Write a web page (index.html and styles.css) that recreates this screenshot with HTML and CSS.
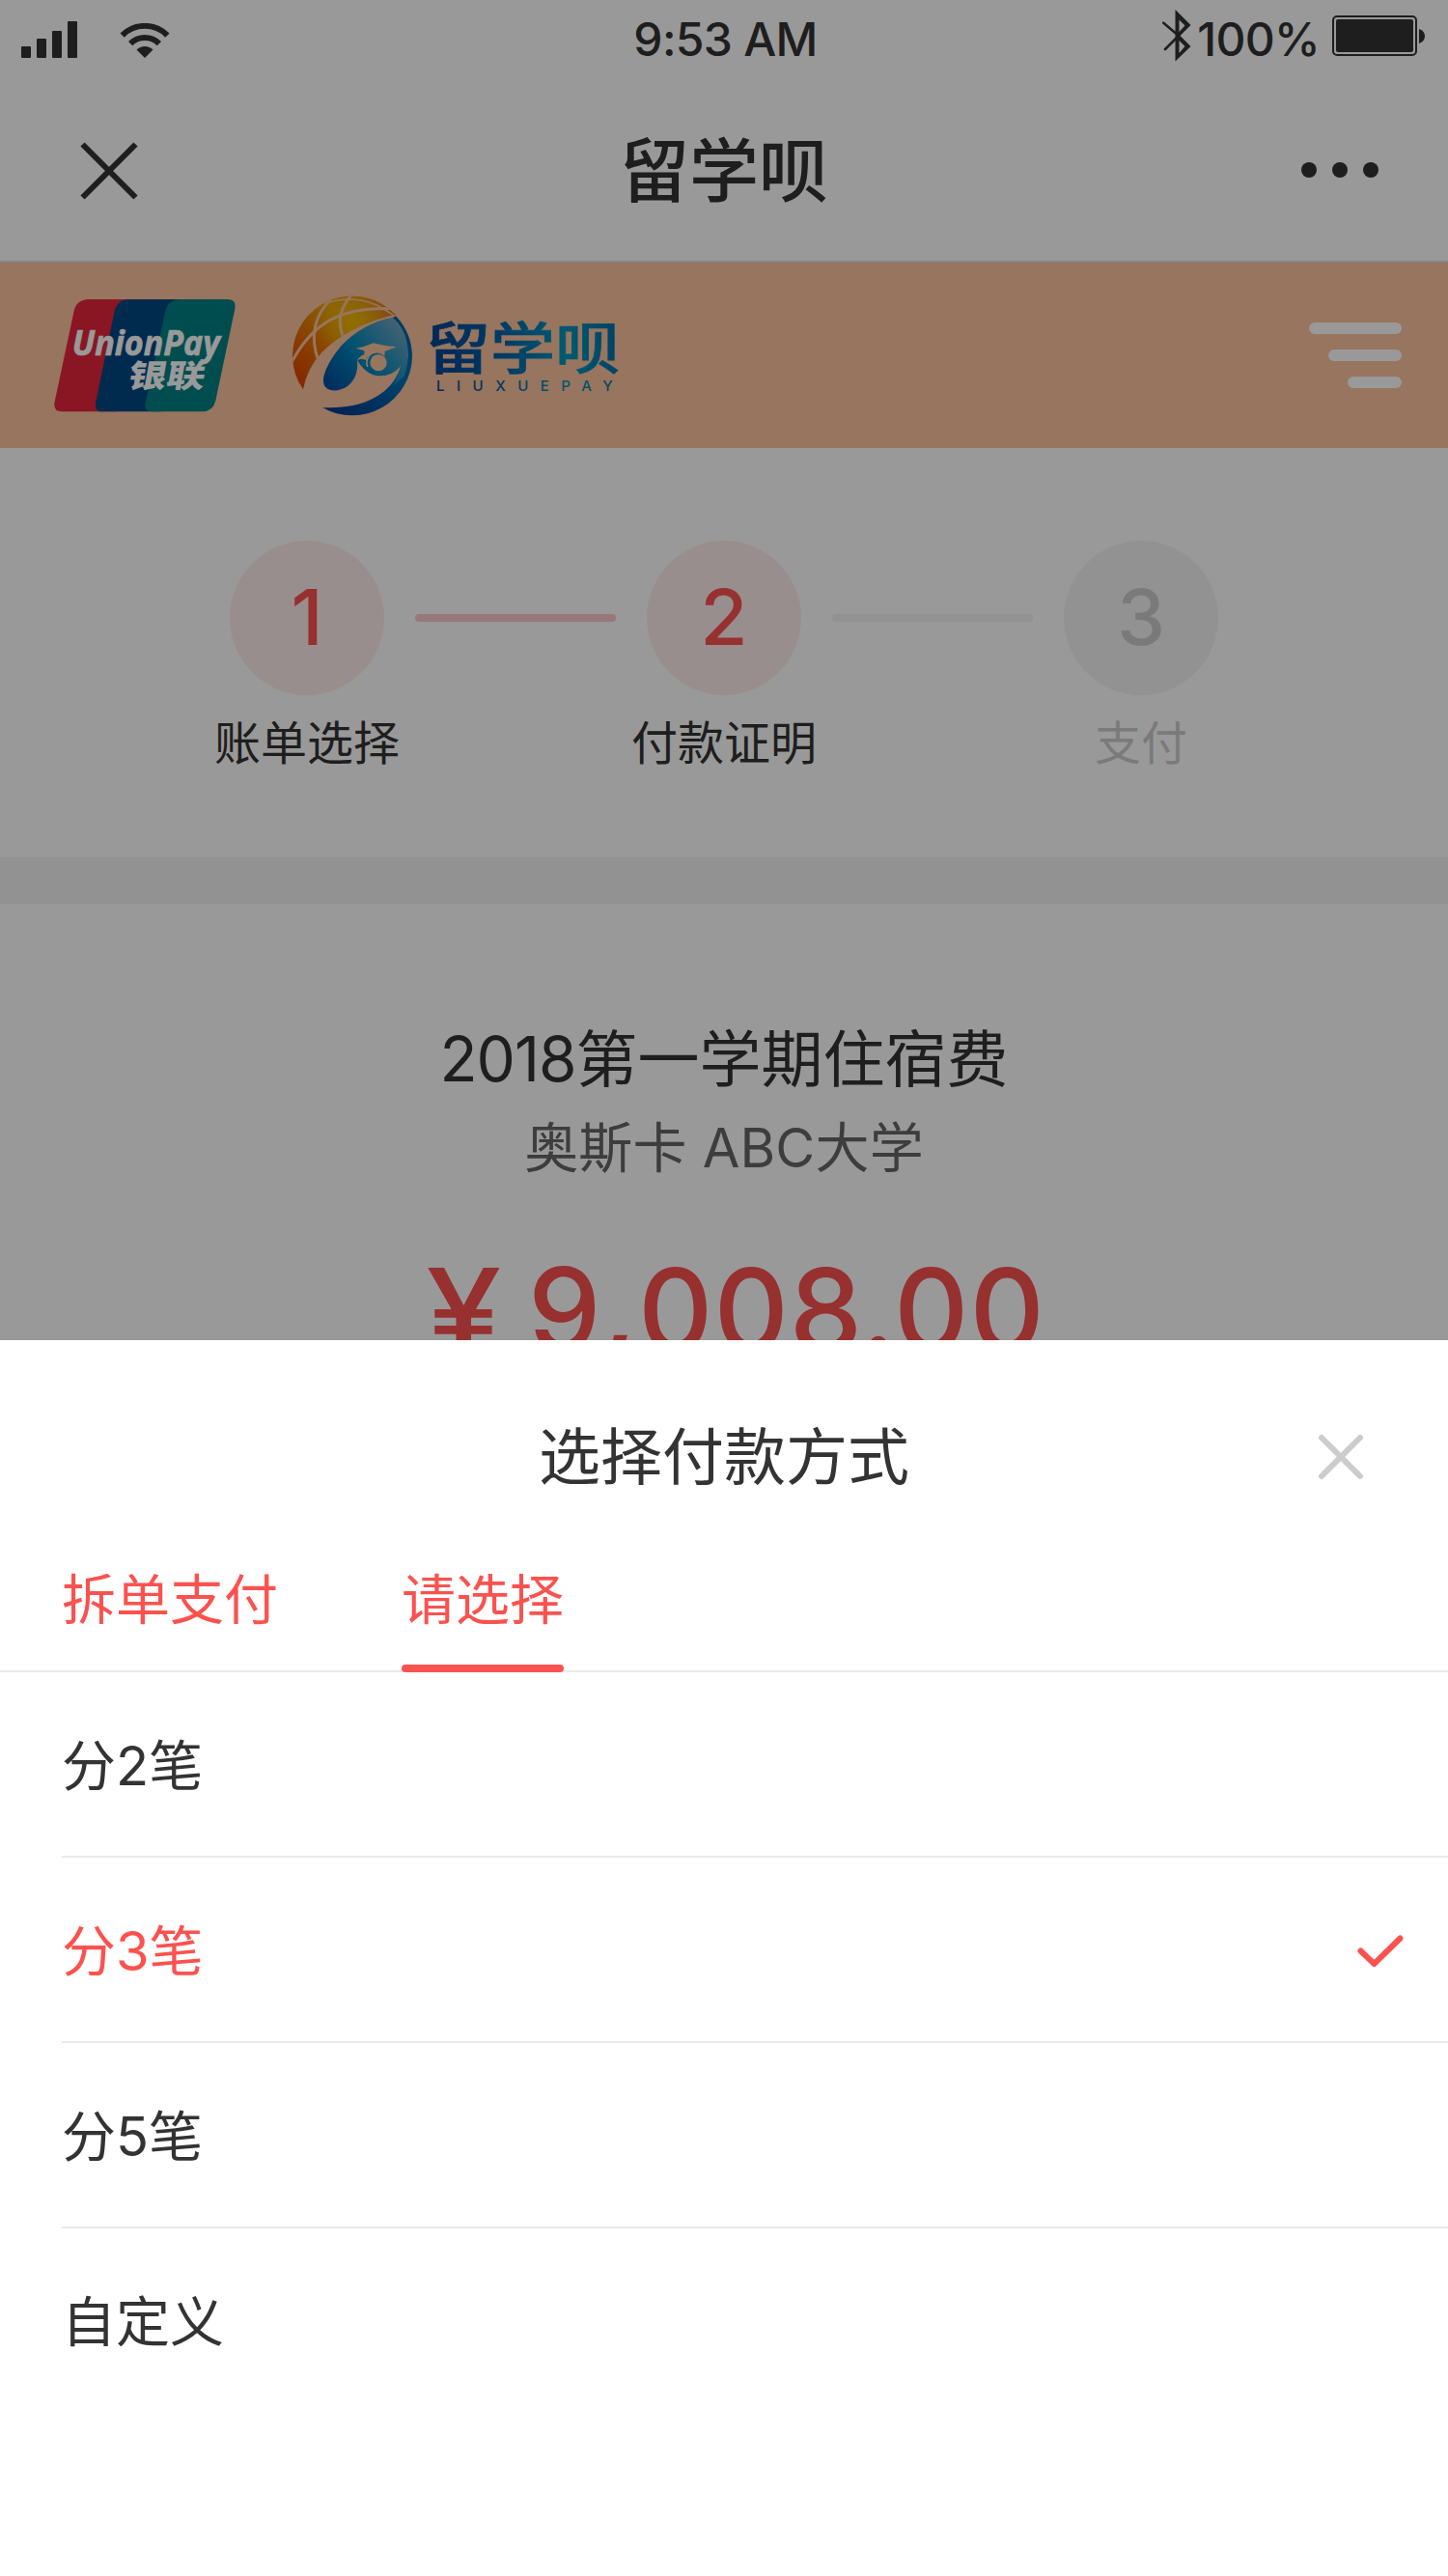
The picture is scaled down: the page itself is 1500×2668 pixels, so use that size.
FILE: index.html
```html
<!DOCTYPE html>
<html lang="zh-CN">
<head>
<meta charset="utf-8">
<title>留学呗</title>
<link rel="stylesheet" href="styles.css">
</head>
<body>
<div class="screen">
  <header class="statusbar">
    <div class="status-left">
      <svg class="signal" width="58" height="38" viewBox="0 0 58 38"><rect y="26" width="10" height="12" rx="1"/><rect x="16" y="18" width="10" height="20" rx="1"/><rect x="32" y="10" width="10" height="28" rx="1"/><rect x="48" width="10" height="38" rx="1"/></svg>
      <svg class="wifi" width="52" height="36" viewBox="-26 -36 52 36"><path d="M0 0L-8.5-8.5A12 12 0 0 1 8.5-8.5Z"/><path class="arc" d="M-14.9-14.9A21 21 0 0 1 14.9-14.9M-23.4-23.4A33 33 0 0 1 23.4-23.4"/></svg>
    </div>
    <div class="time">9:53 AM</div>
    <div class="status-right">
      <svg class="bluetooth" width="30" height="54" viewBox="0 0 30 54"><path fill-rule="evenodd" d="M13.5 0L29.5 16L18.5 27L29.5 38L13.5 53.5ZM17.5 10.5V23L23.5 16.5ZM17.5 32V45L23.5 38Z"/><path class="arms" d="M1.3 13.7L17 27L3 41"/></svg>
      <span class="percent">100%</span>
      <svg class="battery" width="96" height="42" viewBox="0 0 96 42"><rect class="case" x="1" y="1" width="86" height="40" rx="4"/><rect x="4" y="4" width="80" height="34" rx="2"/><path d="M90 14Q96 16 96 21.500Q96 27 90 29Z"/></svg>
    </div>
  </header>

  <nav class="navbar">
    <svg class="nav-close" width="60" height="60" viewBox="0 0 60 60"><path d="M2.500 2.500L57.500 57.500M57.500 2.500L2.500 57.500"/></svg>
    <h1 class="nav-title">留学呗</h1>
    <div class="more"><i></i><i></i><i></i></div>
  </nav>

  <section class="brand">
    <svg class="unionpay" width="188" height="118" viewBox="48 60 564 354">
      <path fill="#e6253c" d="M158 60H300L240 409H72Q44 409 50 378L110 96Q118 60 158 60Z"/>
      <path fill="#004882" d="M282 60H440L380 409H198Q172 409 178 378L236 96Q246 60 282 60Z"/>
      <path fill="#008084" d="M440 60H588Q615 60 610 90L550 375Q542 409 508 409H352Q326 409 333 378L394 96Q404 60 440 60Z"/>
      <text class="up-latin" x="104" y="233" textLength="460" lengthAdjust="spacingAndGlyphs">UnionPay</text>
      <text class="up-cn" transform="translate(274 333) skewX(-10)" textLength="238" lengthAdjust="spacingAndGlyphs">银联</text>
    </svg>
    <svg class="liuxuepay" width="340" height="128" viewBox="36 48 1020 384">
      <defs>
        <linearGradient id="sun" x1="40" y1="330" x2="300" y2="80" gradientUnits="userSpaceOnUse"><stop offset="0" stop-color="#d93c00"/><stop offset=".35" stop-color="#e56b00"/><stop offset=".7" stop-color="#e6a500"/><stop offset="1" stop-color="#dc8420"/></linearGradient>
        <radialGradient id="glow" cx="225" cy="125" r="110" gradientUnits="userSpaceOnUse"><stop offset="0" stop-color="#efb900"/><stop offset="1" stop-color="#efb900" stop-opacity="0"/></radialGradient>
        <linearGradient id="sea" x1="140" y1="350" x2="385" y2="130" gradientUnits="userSpaceOnUse"><stop offset="0" stop-color="#004499"/><stop offset=".5" stop-color="#0088bb"/><stop offset="1" stop-color="#7ba8c0"/></linearGradient>
        <linearGradient id="rim" x1="200" y1="420" x2="400" y2="150" gradientUnits="userSpaceOnUse"><stop offset="0" stop-color="#003c8e"/><stop offset=".6" stop-color="#0072b2"/><stop offset="1" stop-color="#005fa2"/></linearGradient>
        <linearGradient id="word" x1="465" y1="270" x2="1050" y2="180" gradientUnits="userSpaceOnUse"><stop offset="0" stop-color="#004391"/><stop offset=".35" stop-color="#005da5"/><stop offset=".72" stop-color="#0095bd"/><stop offset="1" stop-color="#0070a8"/></linearGradient>
        <path id="cap-of-globe" d="M72 340A186 186 0 0 1 39 236A186 186 0 0 1 360 108C260 128 180 175 130 225Q84 275 72 340Z"/>
        <clipPath id="globe-clip"><use href="#cap-of-globe"/></clipPath>
      </defs>
      <use href="#cap-of-globe" fill="url(#sun)"/>
      <use href="#cap-of-globe" fill="url(#glow)"/>
      <g class="grid" clip-path="url(#globe-clip)">
        <path d="M30 268Q80 168 150 128Q230 82 370 90"/>
        <path d="M158 60Q108 110 106 176Q106 220 124 262"/>
        <path d="M224 44Q184 92 187 130Q188 160 202 190"/>
        <path class="fine" d="M140 74Q220 44 300 78Q340 98 372 124"/>
      </g>
      <path fill="url(#rim)" d="M360 112A186 186 0 0 1 411 236A186 186 0 0 1 132 396C250 402 345 362 375 270L398 240Q396 165 346 120Z"/>
      <path fill="url(#sea)" d="M350 116C395 152 412 225 386 300L350 330Q368 298 375 268Q350 298 310 298Q268 296 240 248Q246 300 210 330Q185 346 162 343Q130 338 136 300Q146 258 190 205Q255 135 350 116Z"/>
      <g class="scholar">
        <path d="M236 212Q265 208 290 196Q325 205 362 208L326 222L325 236Q303 218 278 234Q264 244 270 250Q252 240 240 250Q248 236 262 232L262 220Z"/>
        <circle cx="306" cy="257" r="26"/>
        <path class="lash" d="M272 270A37 37 0 0 1 300 221"/>
      </g>
      <text class="lx-cn" x="453" y="277" textLength="604" lengthAdjust="spacingAndGlyphs">留学呗</text>
      <text class="lx-latin" x="486" y="344" textLength="548">LIUXUEPAY</text>
    </svg>
    <div class="menu"><i></i><i></i><i></i></div>
  </section>

  <section class="steps">
    <div class="step active"><b>1</b><span>账单选择</span></div>
    <i class="link active"></i>
    <div class="step active"><b>2</b><span>付款证明</span></div>
    <i class="link"></i>
    <div class="step"><b>3</b><span>支付</span></div>
  </section>

  <section class="bill">
    <h2 class="bill-title"><span>2018</span>第一学期住宿费</h2>
    <p class="bill-sub">奥斯卡 ABC大学</p>
    <p class="amount"><span class="yen">¥</span>9<span class="comma">,</span>008.00</p>
  </section>

  <div class="scrim"></div>

  <section class="sheet">
    <div class="sheet-head">
      <h2>选择付款方式</h2>
      <svg class="sheet-close" width="48" height="48" viewBox="0 0 48 48"><path d="M4 4L44 44M44 4L4 44"/></svg>
    </div>
    <div class="tabs"><span class="tab">拆单支付</span><span class="tab current">请选择</span></div>
    <ul class="options">
      <li>分2笔</li>
      <li class="selected">分3笔<svg width="48" height="34" viewBox="0 0 48 34"><path d="M3.500 16.500L17.500 30L44.500 3.500"/></svg></li>
      <li>分5笔</li>
      <li>自定义</li>
    </ul>
  </section>
</div>
</body>
</html>
```
FILE: styles.css
```css
* { box-sizing: border-box; margin: 0; padding: 0; }
body {
  width: 1500px;
  font-family: Inter, "Noto Sans CJK SC", sans-serif;
  color: #333;
  background: #fff;
}
svg { display: block; flex: none; }
.screen {
  position: relative;
  height: 2668px;
  overflow: hidden;
  background: #fff;
}

/* status bar */
.statusbar {
  display: grid;
  grid-template-columns: 1fr auto 1fr;
  height: 80px;
  fill: #333;
}
.status-left { display: flex; gap: 44px; padding: 22px 0 0 22px; }
.wifi { margin-top: 2px; }
.arc { fill: none; stroke: #333; stroke-width: 6; }
.time, .percent { font-size: 48px; font-weight: 500; line-height: 60px; }
.time { padding: 11px 0 0 3px; letter-spacing: -.7px; }
.status-right { display: flex; justify-content: flex-end; padding: 10px 24px 0 0; }
.percent { margin: 1px 13px 0 6px; letter-spacing: -.7px; }
.arms { fill: none; stroke: #333; stroke-width: 2.6; stroke-linecap: round; }
.battery { margin-top: 6px; }
.case { fill: none; stroke: #333; stroke-width: 2; }

/* navigation bar */
.navbar {
  display: grid;
  grid-template-columns: 1fr auto 1fr;
  align-items: center;
  height: 192px;
  padding: 3px 72px 0 83px;
  border-bottom: 2px solid #dadde2;
}
.nav-close { stroke: #333; stroke-width: 6; }
.nav-title { font-size: 72px; font-weight: 500; line-height: 90px; padding-right: 11px; }
.more { display: flex; justify-content: flex-end; gap: 16px; margin-top: -1px; }
.more i { width: 16px; height: 16px; border-radius: 50%; background: #333; }

/* brand strip */
.brand {
  display: flex;
  align-items: flex-start;
  height: 192px;
  padding: 34px 48px 0 56px;
  background: #fcc39d;
}
.unionpay { margin-top: 4px; }
.liuxuepay { margin-left: 58px; }
.up-latin { font: italic 700 106px "Open Sans", sans-serif; fill: #fff; stroke: #fff; stroke-width: 2; }
.up-cn { font: 900 98px "Noto Sans CJK SC", sans-serif; fill: #fff; }
.lx-cn { font: 500 174px "Noto Sans CJK SC", sans-serif; fill: url(#word); stroke: url(#word); stroke-width: 2; }
.lx-latin { font: 500 45px Inter, sans-serif; fill: url(#word); }
.grid { fill: none; stroke: #fcc39d; stroke-width: 9; }
.fine { stroke-width: 5; }
.scholar { fill: #fcc39d; }
.lash { fill: none; stroke: #fcc39d; stroke-width: 5; }
.menu {
  display: flex;
  flex-direction: column;
  align-items: flex-end;
  gap: 16px;
  margin: 28px 0 0 auto;
}
.menu i { width: 96px; height: 12px; border-radius: 6px; background: #fff; }
.menu i:nth-child(2) { width: 76px; }
.menu i:nth-child(3) { width: 56px; }

/* progress steps */
.steps {
  display: flex;
  justify-content: center;
  height: 472px;
  padding-top: 96px;
  border-bottom: 48px solid #f4f4f4;
}
.step {
  display: flex;
  flex-direction: column;
  align-items: center;
  width: 224px;
  color: #ccc;
}
.step b {
  width: 160px;
  height: 160px;
  border-radius: 50%;
  background: #f4f4f4;
  font-size: 80px;
  font-weight: 500;
  line-height: 158px;
  text-align: center;
}
.step span { margin-top: 20px; font-size: 48px; line-height: 60px; }
.step.active b { background: #ffeded; color: #fb524f; }
.step.active span { color: #333; }
.link { width: 208px; height: 8px; margin-top: 76px; border-radius: 4px; background: #f4f4f4; }
.link.active { background: #fdc9c8; }

/* bill */
.bill { padding-top: 121px; text-align: center; }
.bill-title { font-size: 64px; font-weight: 400; line-height: 80px; }
.bill-title span { letter-spacing: -1px; }
.bill-sub { margin-top: 12px; font-size: 56px; line-height: 80px; letter-spacing: .2px; color: #666; }
.amount {
  margin-top: 58px;
  padding-left: 30px;
  font-size: 120px;
  font-weight: 500;
  line-height: 140px;
  letter-spacing: 1px;
  color: #fb524f;
}
.yen { display: inline-block; margin-right: 32px; transform: scaleX(1.17); }
.comma { line-height: 0; vertical-align: 5px; }

.scrim { position: absolute; inset: 0; background: rgba(0, 0, 0, .4); }

/* payment sheet */
.sheet {
  position: absolute;
  inset: 1388px 0 0 0;
  background: #fff;
}
.sheet-head {
  display: grid;
  grid-template-columns: 1fr auto 1fr;
  align-items: center;
  height: 240px;
  padding: 2px 87px 0 0;
}
.sheet-head h2 { grid-column: 2; font-size: 64px; font-weight: 400; line-height: 80px; margin-left: 87px; }
.sheet-close { justify-self: end; stroke: #ccc; stroke-width: 6; stroke-linecap: round; }
.tabs {
  display: flex;
  gap: 128px;
  height: 104px;
  padding-left: 64px;
  border-bottom: 2px solid #e9e9e9;
  color: #fb524f;
  font-size: 56px;
  line-height: 58px;
}
.tab { display: flex; flex-direction: column; justify-content: space-between; height: 104px; }
.tab.current::after { content: ""; height: 8px; border-radius: 4px; background: #fb524f; }
.options { list-style: none; padding-left: 64px; font-size: 56px; line-height: 80px; }
.options li {
  display: flex;
  align-items: center;
  justify-content: space-between;
  height: 192px;
  padding: 3px 46px 0 0;
  border-bottom: 2px solid #e9e9e9;
}
.options li:last-child { border-bottom-color: transparent; }
.options .selected { color: #fb524f; }
.options svg { fill: none; stroke: #fb524f; stroke-width: 6; stroke-linecap: round; stroke-linejoin: round; }
```
